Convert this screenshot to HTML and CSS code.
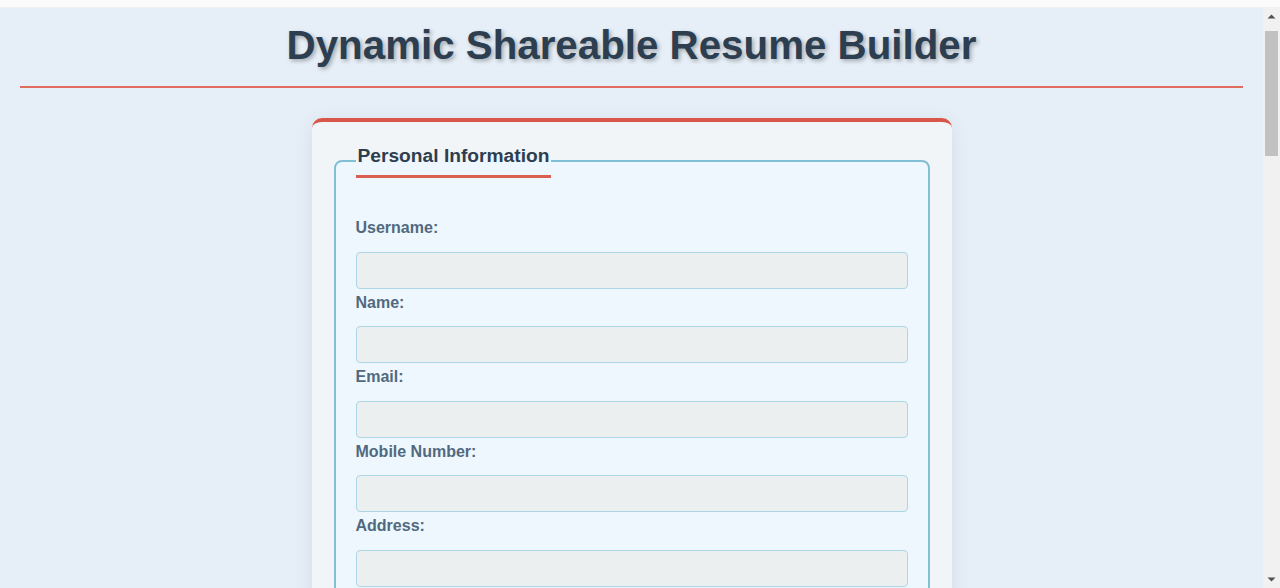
FILE: index.html
```html
<!DOCTYPE html>
<html lang="en">
<head>
<meta charset="utf-8">
<title>Dynamic Shareable Resume Builder</title>
<link rel="stylesheet" href="styles.css">
</head>
<body>
<div class="topbar"></div>
<div class="viewport">
  <div class="page">
    <header class="site-header">
      <h1 class="title">Dynamic Shareable Resume Builder</h1>
    </header>
    <main class="card">
      <form class="resume-form">
        <fieldset class="section">
          <legend class="section-title">Personal Information</legend>
          <div class="fields">
            <div class="field">
              <label class="field-label" for="username">Username:</label>
              <input class="field-input" id="username" type="text">
            </div>
            <div class="field">
              <label class="field-label" for="name">Name:</label>
              <input class="field-input" id="name" type="text">
            </div>
            <div class="field">
              <label class="field-label" for="email">Email:</label>
              <input class="field-input" id="email" type="email">
            </div>
            <div class="field">
              <label class="field-label" for="mobile">Mobile Number:</label>
              <input class="field-input" id="mobile" type="tel">
            </div>
            <div class="field">
              <label class="field-label" for="address">Address:</label>
              <input class="field-input" id="address" type="text">
            </div>
          </div>
        </fieldset>
      </form>
    </main>
  </div>
  <div class="scrollbar">
    <div class="scroll-arrow">
      <svg width="9" height="5" viewBox="0 0 9 5"><path d="M0.5 4.5 L4.5 0.5 L8.5 4.5 Z" fill="#505050"/></svg>
    </div>
    <div class="scroll-track">
      <div class="scroll-thumb"></div>
    </div>
    <div class="scroll-arrow">
      <svg width="9" height="5" viewBox="0 0 9 5"><path d="M0.5 0.5 L4.5 4.5 L8.5 0.5 Z" fill="#505050"/></svg>
    </div>
  </div>
</div>
</body>
</html>
```

FILE: styles.css
```css
html, body {
  margin: 0;
  padding: 0;
  height: 100%;
  overflow: hidden;
}

body {
  font-family: "Liberation Sans", Arial, sans-serif;
  background: #e6eef7;
  display: flex;
  flex-direction: column;
}

.topbar {
  height: 7px;
  flex: none;
  background: #fbfbfb;
  border-bottom: 1px solid #eef0f2;
}

.viewport {
  flex: 1;
  display: flex;
  min-height: 0;
}

.page {
  flex: 1;
  min-width: 0;
  overflow: hidden;
}

.site-header {
  margin: 0 20px;
  padding: 15px 0 17px;
  border-bottom: 2px solid #e06c5f;
  text-align: center;
}

.title {
  margin: 0;
  font-size: 40.3px;
  line-height: 46px;
  font-weight: bold;
  color: #2c3e50;
  text-shadow: 2px 2px 4px rgba(0, 0, 0, 0.3);
}

.card {
  box-sizing: border-box;
  width: 640px;
  margin: 30px auto 0;
  padding: 20px;
  background: #f2f5f8;
  border-top: 4px solid #d9574a;
  border-radius: 10px;
  box-shadow: 0 4px 20px rgba(0, 0, 0, 0.08);
}

.resume-form {
  margin: 0;
}

.section {
  margin: 1px 2px 0;
  padding: 0 20px 20px;
  border: 2px solid #80bfd5;
  border-radius: 8px;
  background: #eef7fd;
}

.section-title {
  padding: 2px 2px 8px;
  font-size: 19.2px;
  line-height: 22px;
  font-weight: bold;
  color: #2c3e50;
  border-bottom: 3px solid #d9604f;
}

.fields {
  padding-top: 41px;
  display: flex;
  flex-direction: column;
}

.field {
  display: flex;
  flex-direction: column;
}

.field-label {
  margin-bottom: 14px;
  font-size: 16px;
  line-height: 18.5px;
  font-weight: bold;
  color: #51697f;
}

.field-input {
  box-sizing: border-box;
  height: 37px;
  margin: 0 0 5px;
  background: #ebeff0;
  border: 1px solid #acd6e3;
  border-radius: 4px;
  font-family: inherit;
  font-size: 16px;
}

.scrollbar {
  width: 17px;
  flex: none;
  background: #f1f1f1;
  display: flex;
  flex-direction: column;
}

.scroll-arrow {
  height: 17px;
  display: flex;
  align-items: center;
  justify-content: center;
}

.scroll-track {
  flex: 1;
  padding: 6px 2px 0;
}

.scroll-thumb {
  height: 125px;
  background: #c1c1c1;
}
```
